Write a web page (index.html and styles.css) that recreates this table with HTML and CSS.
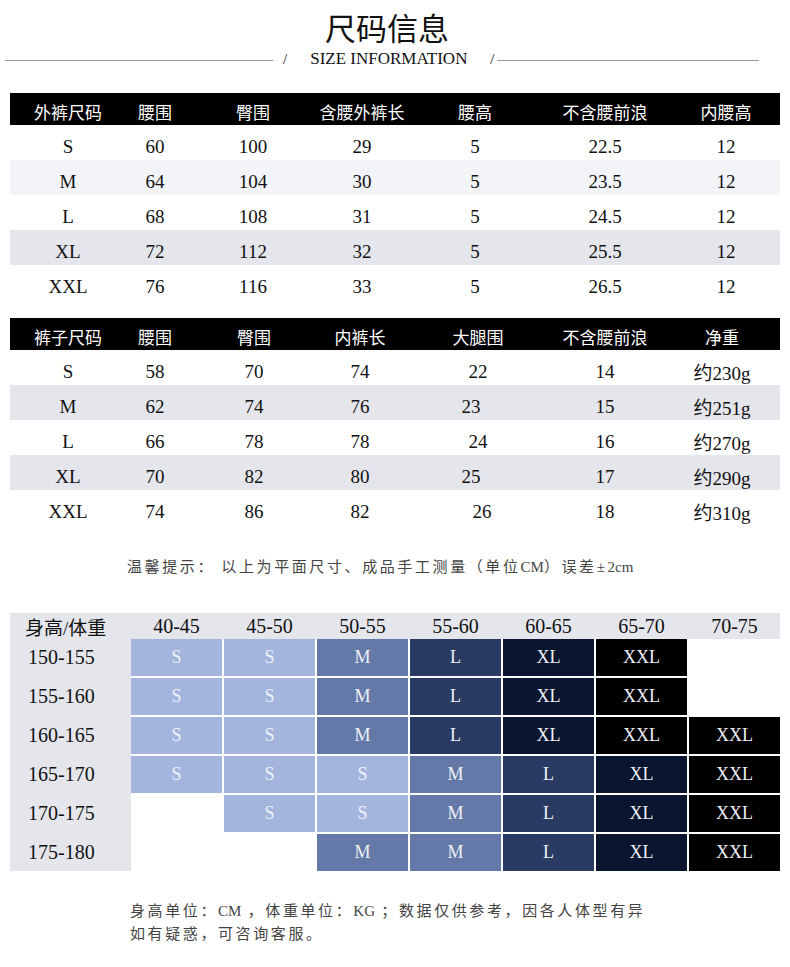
FILE: index.html
```html
<!DOCTYPE html>
<html lang="zh">
<head>
<meta charset="utf-8">
<title>尺码信息</title>
<link rel="stylesheet" href="styles.css">
</head>
<body>
<div class="page">
  <h1 class="title">尺码信息</h1>
  <div class="sub">
    <span class="line l1"></span>
    <span class="slash">/</span>
    <span class="en">SIZE INFORMATION</span>
    <span class="slash s2">/</span>
    <span class="line l2"></span>
  </div>

  <div class="tbl t1">
    <div class="row head"><span>外裤尺码</span><span>腰围</span><span>臀围</span><span>含腰外裤长</span><span>腰高</span><span>不含腰前浪</span><span>内腰高</span></div>
    <div class="row"><span>S</span><span>60</span><span>100</span><span>29</span><span>5</span><span>22.5</span><span>12</span></div>
    <div class="row pale"><span>M</span><span>64</span><span>104</span><span>30</span><span>5</span><span>23.5</span><span>12</span></div>
    <div class="row"><span>L</span><span>68</span><span>108</span><span>31</span><span>5</span><span>24.5</span><span>12</span></div>
    <div class="row grey"><span>XL</span><span>72</span><span>112</span><span>32</span><span>5</span><span>25.5</span><span>12</span></div>
    <div class="row"><span>XXL</span><span>76</span><span>116</span><span>33</span><span>5</span><span>26.5</span><span>12</span></div>
  </div>

  <div class="tbl t2">
    <div class="row head"><span>裤子尺码</span><span>腰围</span><span>臀围</span><span>内裤长</span><span>大腿围</span><span>不含腰前浪</span><span>净重</span></div>
    <div class="row"><span>S</span><span>58</span><span>70</span><span>74</span><span>22</span><span>14</span><span>约230g</span></div>
    <div class="row grey"><span>M</span><span>62</span><span>74</span><span>76</span><span class="nudge-l">23</span><span>15</span><span>约251g</span></div>
    <div class="row"><span>L</span><span>66</span><span>78</span><span>78</span><span>24</span><span>16</span><span>约270g</span></div>
    <div class="row grey"><span>XL</span><span>70</span><span>82</span><span>80</span><span class="nudge-l">25</span><span>17</span><span>约290g</span></div>
    <div class="row"><span>XXL</span><span>74</span><span>86</span><span>82</span><span class="nudge-r">26</span><span>18</span><span>约310g</span></div>
  </div>

  <p class="note">温馨提示： 以上为平面尺寸、成品手工测量（单位<span class="lat">CM</span>）误差±<span class="lat">2cm</span></p>

  <div class="fit">
    <div class="fit-head">
      <span class="lab">身高/体重</span><span>40-45</span><span>45-50</span><span>50-55</span><span>55-60</span><span>60-65</span><span>65-70</span><span>70-75</span>
    </div>
    <div class="fit-body">
      <span class="lab">150-155</span><span class="c s">S</span><span class="c s">S</span><span class="c m">M</span><span class="c l">L</span><span class="c xl">XL</span><span class="c xxl">XXL</span><span class="c"></span>
      <span class="lab">155-160</span><span class="c s">S</span><span class="c s">S</span><span class="c m">M</span><span class="c l">L</span><span class="c xl">XL</span><span class="c xxl">XXL</span><span class="c"></span>
      <span class="lab">160-165</span><span class="c s">S</span><span class="c s">S</span><span class="c m">M</span><span class="c l">L</span><span class="c xl">XL</span><span class="c xxl">XXL</span><span class="c xxl">XXL</span>
      <span class="lab">165-170</span><span class="c s">S</span><span class="c s">S</span><span class="c s">S</span><span class="c m">M</span><span class="c l">L</span><span class="c xl">XL</span><span class="c xxl">XXL</span>
      <span class="lab">170-175</span><span class="c"></span><span class="c s">S</span><span class="c s">S</span><span class="c m">M</span><span class="c l">L</span><span class="c xl">XL</span><span class="c xxl">XXL</span>
      <span class="lab">175-180</span><span class="c"></span><span class="c"></span><span class="c m">M</span><span class="c m">M</span><span class="c l">L</span><span class="c xl">XL</span><span class="c xxl">XXL</span>
    </div>
  </div>

  <p class="foot">身高单位：<span class="lat">CM</span> ，体重单位：<span class="lat">KG</span> ；数据仅供参考，因各人体型有异<br>如有疑惑，可咨询客服。</p>
</div>
</body>
</html>
```

FILE: styles.css
```css
* { box-sizing: border-box; }

html, body {
  margin: 0;
  padding: 0;
  background: #ffffff;
}

body {
  font-family: "Liberation Serif", "Noto Sans CJK SC", serif;
  color: #111;
}

.page {
  width: 790px;
  padding: 0 10px;
}

.title {
  margin: 0;
  padding-top: 12px;
  padding-right: 16px;
  font-size: 31px;
  line-height: 36px;
  font-weight: 400;
  text-align: center;
  color: #111;
}

.sub {
  display: flex;
  align-items: center;
  height: 22px;
  margin-left: -5px;
  color: #111;
}

.line {
  height: 1px;
  background: #9a9a9a;
}

.l1 { width: 268px; margin-top: 2px; }

.slash {
  margin-left: 10px;
  font-size: 15px;
}

.en {
  margin-left: 23px;
  font-size: 17px;
  white-space: nowrap;
  width: 156px;
}

.s2 { margin-left: 24px; }

.l2 { width: 262px; margin-left: 3px; margin-top: 2px; }

.tbl {
  width: 770px;
}

.t1 { margin-top: 23px; }
.t2 { margin-top: 18px; }

.row {
  display: grid;
  height: 35px;
  align-items: center;
  font-size: 19px;
  color: #111;
}

.row > span {
  text-align: center;
  white-space: nowrap;
  padding-top: 8px;
}

.t1 .row { grid-template-columns: 116px 58px 128px 100px 126px 134px 108px; }
.t1 .row > span:nth-child(3) { padding-left: 10px; }
.t2 .row { grid-template-columns: 116px 58px 140px 72px 164px 90px 130px; }
.t2 .row > span:last-child { padding-left: 14px; }

.row.head {
  height: 32px;
  background: #000;
  color: #fff;
  font-size: 17px;
  font-family: "Noto Sans CJK SC", sans-serif;
}

.row.head > span {
  padding-top: 5px;
  line-height: 27px;
}

.row.pale { background: #f3f4f7; }
.row.grey { background: #e4e6ec; }

.t2 .row > span.nudge-l { padding-right: 14px; }
.t2 .row > span.nudge-r { padding-left: 8px; }

.note {
  margin: 30px 0 0;
  padding-left: 117px;
  font-size: 15px;
  line-height: 24px;
  letter-spacing: 2.6px;
  color: #444;
}

.lat { letter-spacing: 0; }

.fit {
  margin-top: 34px;
  width: 770px;
}

.fit-head {
  display: grid;
  grid-template-columns: 119px repeat(7, 91px);
  column-gap: 2px;
  height: 26px;
  align-items: center;
  background: #e4e6ec;
  font-size: 20px;
  color: #111;
}

.fit-head > span { text-align: center; }
.fit-head > .lab {
  text-align: left;
  padding-left: 15px;
  font-size: 19px;
}

.fit-body {
  display: grid;
  grid-template-columns: 119px repeat(7, 91px);
  grid-auto-rows: 37px;
  column-gap: 2px;
  row-gap: 2px;
  background: linear-gradient(to right, #e4e6ec 121px, #ffffff 121px);
}

.fit-body .lab {
  display: flex;
  align-items: center;
  padding-left: 18px;
  font-size: 20px;
  color: #111;
}

.c {
  display: flex;
  align-items: center;
  justify-content: center;
  font-size: 18px;
  color: #eef1f8;
}

.c.s { background: #a3b5dd; }
.c.m { background: #6579a9; }
.c.l { background: #2a3b63; }
.c.xl { background: #0a1530; }
.c.xxl { background: #000000; }

.foot {
  margin: 29px 0 0;
  padding-left: 120px;
  font-size: 15px;
  line-height: 23px;
  letter-spacing: 2.6px;
  color: #444;
}
```
